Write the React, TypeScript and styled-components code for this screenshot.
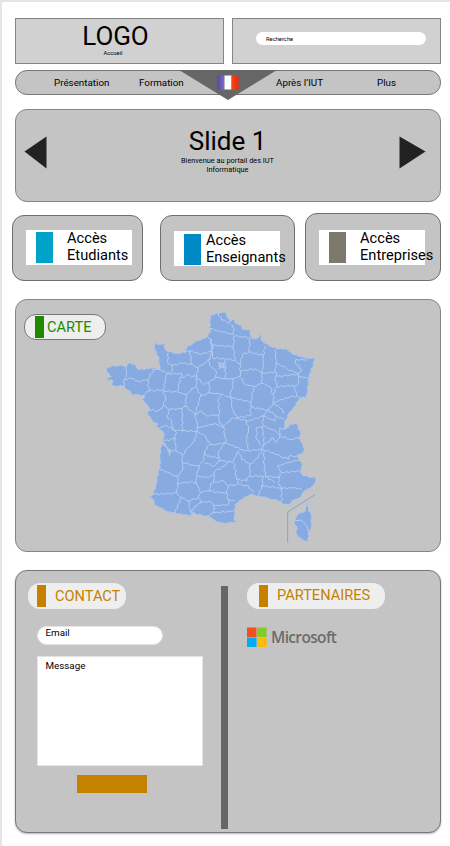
import React from 'react';
import styled, { createGlobalStyle } from 'styled-components';

const GlobalStyle = createGlobalStyle`
  *, *::before, *::after { box-sizing: border-box; }
  body { margin: 0; background: #fff; }
  h1, h2, p { margin: 0; font-weight: 400; }
`;

const Page = styled.div`
  width: 450px;
  height: 846px;
  overflow: hidden;
  border-top: 2px solid #e5e5e5;
  border-left: 2px solid #e5e5e5;
  padding: 16px 9px 0 13px;
  background: #fff;
  color: #000;
  font-family: Roboto, 'Liberation Sans', sans-serif;
`;

const Header = styled.header`
  display: flex;
  justify-content: space-between;
  height: 46px;
`;

const HeaderBox = styled.div`
  height: 46px;
  width: 209px;
  border: 1px solid #858585;
  background: #d1d1d1;
`;

const Brand = styled(HeaderBox)`
  padding: 2px 8px 0 0;
  text-align: center;
`;

const Logo = styled.h1`
  font-size: 26px;
  line-height: 30px;
  letter-spacing: -0.1px;
`;

const Tagline = styled.p`
  font-size: 5.8px;
  line-height: 5px;
  padding-right: 5px;
`;

const SearchBox = styled(HeaderBox)`
  padding: 13px 0 0 23px;
`;

const SearchField = styled.div`
  width: 170px;
  height: 13px;
  border-radius: 7px;
  padding-left: 10px;
  background: #fff;
  font-size: 5.8px;
  line-height: 14px;
`;

const Nav = styled.nav`
  display: grid;
  grid-template-columns: 38px 85px 79px 58px 101px 1fr;
  height: 25px;
  margin-top: 6px;
  border: 1px solid #777;
  border-radius: 12px;
  background: #c4c4c4;
  font-size: 9.8px;
  line-height: 23px;
  position: relative;
`;

const NavItem = styled.span<{ $col: number }>`
  grid-column: ${(p) => p.$col};
  grid-row: 1;
  white-space: nowrap;
  z-index: 1;
`;

const LanguageMarker = styled.svg`
  position: absolute;
  left: 163px;
  top: -1px;
`;

const Slide = styled.section`
  display: flex;
  justify-content: space-between;
  height: 93px;
  margin-top: 14px;
  padding: 0 14px 0 8px;
  border: 1px solid #858585;
  border-radius: 12px;
  background: #c4c4c4;
`;

const Arrow = styled.svg`
  margin-top: 26px;
`;

const SlideText = styled.div`
  padding: 15px 0 0 9px;
  text-align: center;
`;

const SlideTitle = styled.h2`
  font-size: 26px;
  line-height: 32px;
`;

const SlideCaption = styled.p`
  font-size: 7.35px;
  line-height: 8.5px;
`;

const Accesses = styled.section`
  display: flex;
  align-items: flex-end;
  height: 68px;
  margin: 11px 0 0 -3px;
`;

const AccessCard = styled.div<{ $w: number; $h: number; $gap: number; $top: number }>`
  flex: none;
  width: ${(p) => p.$w}px;
  height: ${(p) => p.$h}px;
  margin-right: ${(p) => p.$gap}px;
  padding: ${(p) => p.$top}px 0 0 13.4px;
  border: 1px solid #6f6f6f;
  border-radius: 12px;
  background: #c4c4c4;
`;

const AccessLabel = styled.div`
  display: flex;
  width: 106px;
  height: 35px;
  padding: 2.5px 0 0 10px;
  background: #fff;
`;

const Swatch = styled.span<{ $color: string }>`
  flex: none;
  width: 17px;
  height: 31px;
  background: ${(p) => p.$color};
`;

const AccessText = styled.span<{ $gap: number }>`
  margin: -2px 0 0 ${(p) => p.$gap}px;
  font-size: 14.6px;
  line-height: 17.3px;
  white-space: nowrap;
`;

const MapPanel = styled.section`
  display: flex;
  height: 253px;
  margin-top: 18px;
  padding: 0 0 0 8px;
  border: 1px solid #858585;
  border-radius: 12px;
  background: #c4c4c4;
`;

const Tag = styled.h2<{ $w: number; $pad: number; $gap: number; $color: string; $lift?: number }>`
  display: flex;
  flex: none;
  width: ${(p) => p.$w}px;
  height: 26px;
  padding: 2px 0 0 ${(p) => p.$pad}px;
  gap: ${(p) => p.$gap}px;
  border-radius: 12px;
  background: #eee;
  color: ${(p) => p.$color};
  font-size: 14.6px;
  line-height: ${(p) => 23 - (p.$lift ?? 0)}px;
`;

const MapTag = styled(Tag)`
  margin-top: 14px;
  padding-top: 1px;
  border: 1px solid #777;
`;

const TagBar = styled.span<{ $color: string }>`
  flex: none;
  width: 8.5px;
  height: 22px;
  background: ${(p) => p.$color};
`;

const MapDrawing = styled.svg`
  flex: none;
  margin-left: -11px;
`;

const BottomPanel = styled.section`
  display: flex;
  height: 263px;
  margin-top: 18px;
  border: 1px solid #777;
  border-radius: 12px;
  background: #c4c4c4;
  box-shadow: 0 1px 2px rgba(0, 0, 0, 0.3);
`;

const Contact = styled.div`
  width: 205px;
  padding: 12px 0 0 12px;
`;

const EmailField = styled.div`
  width: 126px;
  height: 19px;
  margin: 17px 0 0 9px;
  padding-left: 7.5px;
  border: 1px solid #e4e4e4;
  border-radius: 10px;
  background: #fff;
  font-size: 9.8px;
  line-height: 11px;
`;

const MessageField = styled.div`
  width: 166px;
  height: 110px;
  margin: 11px 0 0 9px;
  padding: 3px 7.5px;
  border: 1px solid #e4e4e4;
  background: #fff;
  font-size: 9.8px;
  line-height: 12px;
`;

const SendButton = styled.button`
  display: block;
  width: 70px;
  height: 18px;
  margin: 9px 0 0 49px;
  padding: 0;
  border: 0;
  background: #c48200;
`;

const Divider = styled.div`
  width: 7px;
  height: 243px;
  margin-top: 15px;
  background: #666;
`;

const Partners = styled.div`
  padding: 12px 0 0 19px;
`;

const PartnerLogo = styled.div`
  display: flex;
  gap: 4px;
  margin-top: 18px;
  color: #6c6c6c;
  font-family: 'Open Sans', 'Noto Sans', sans-serif;
  font-size: 15.5px;
  font-weight: 600;
  line-height: 20px;
  letter-spacing: -0.65px;
`;

const OUTLINE = '346 48 365 42 392 38 396 52 402 60 406 68 414 58 421 72 440 80 442 90 462 90 468 110 472 118 490 115 496 102 500 110 498 122 510 132 524 140 543 145 548 150 575 148 592 165 620 172 630 176 660 178 655 195 642 230 638 270 634 294 618 296 610 305 592 330 578 348 575 360 568 375 566 390 575 387 585 375 605 373 610 390 618 405 612 417 622 433 628 450 620 463 605 470 615 485 623 495 615 515 620 525 640 533 662 535 660 550 645 567 628 575 615 595 592 603 582 615 565 615 558 607 535 600 520 597 502 593 480 588 465 585 442 600 420 615 418 663 425 667 400 670 390 673 365 667 350 655 330 650 290 640 290 647 265 647 240 640 220 637 195 625 180 617 178 603 162 595 175 585 182 560 190 520 196 505 195 465 200 432 218 448 223 470 226 455 212 437 200 425 207 415 205 398 192 385 180 380 190 375 172 365 163 350 155 340 165 330 158 318 140 300 150 292 130 285 108 288 105 275 90 265 75 258 65 262 50 258 55 245 35 240 50 232 35 218 36 204 60 200 80 198 95 200 105 190 120 195 130 212 155 208 172 205 195 210 192 180 180 150 178 130 190 135 207 132 208 145 218 157 245 162 270 160 275 145 300 128 335 115 345 100';

const CORSICA = '638 610 640 635 648 645 650 680 642 695 638 727 630 725 610 713 602 695 608 690 598 670 602 655 615 640 632 635 635 610';

const BORDERS = [
  '95 200 93 235 88 240 88 262', '88 240 110 238 130 245 160 242', '172 205 176 212 158 240 162 275 140 292',
  '176 212 195 210 215 222 230 218', '162 275 205 272 215 225', '230 218 232 198 218 190 220 160',
  '230 198 262 192 290 195 285 155 270 158', '215 225 260 222 250 265 245 278 205 275',
  '290 195 308 205 305 232 275 228 260 235', '285 155 320 165 350 155 345 180 325 195 308 205',
  '350 155 348 120 338 112', '305 232 303 258 275 285 248 278', '275 285 270 320 262 328 225 330 205 318 212 295 205 275',
  '270 320 300 345 310 310 318 290 303 262', '225 330 215 350 230 365 233 390 262 395 262 328', '160 330 190 335 205 320',
  '318 290 345 280', '300 345 320 335 335 350 355 348 372 350', '305 232 325 255 342 250',
  '345 88 380 98 415 105 418 90 410 75', '370 42 380 62 405 70', '348 120 352 138 415 142 418 110 468 115',
  '352 138 352 175 420 182 435 195 442 165 462 158 465 118', '415 142 420 182', '462 158 505 168 510 140',
  '435 195 436 215 480 208 502 222 505 195 505 168', '338 180 350 205 363 215 362 235 342 250', '390 182 392 238 362 235',
  '392 240 412 238 415 262 405 285 408 295', '342 250 345 280 378 285 408 295', '412 238 436 230 436 215',
  '436 235 450 255 480 262 500 252 502 222', '408 295 468 308 475 265', '378 288 370 300 372 330 372 365 385 383',
  '408 295 412 330 425 355 466 350 468 308', '500 252 525 262 535 285 535 310 520 332 495 330 468 322',
  '502 222 540 218 545 200 540 150', '545 190 575 208 610 222 620 210 600 190 603 180 635 182',
  '545 218 540 235 545 262 535 285', '545 232 610 224', '612 230 640 238', '545 262 597 258 605 290 618 296',
  '610 225 612 250 600 262', '535 310 585 292 605 290', '535 310 550 320 570 342', '520 332 545 350 568 362',
  '195 385 215 378 233 390', '205 425 240 418 245 400 233 390', '262 395 305 395 308 380 300 345',
  '240 418 242 450 262 468 262 488', '223 450 242 455', '305 395 300 425 270 455 262 468',
  '305 385 335 380 360 373', '305 395 330 410 345 435 365 435', '262 488 300 500 312 500 328 480 328 455 345 435',
  '262 490 265 510 248 530 230 525 205 512 195 512', '248 530 250 545 245 580', '175 585 245 582 258 595 282 605 310 595 318 580 305 555 302 540 312 500',
  '248 552 285 548 305 550', '258 595 240 640', '282 605 285 640', '318 580 335 575 345 575', '310 530 340 535 358 525',
  '310 595 318 610 345 605 355 620', '318 610 300 620 290 640', '360 373 385 383 395 370 415 355 460 365 505 350 520 332',
  '385 383 390 405 392 430 450 455 500 450', '455 365 460 390 455 420 460 450', '485 385 485 420 500 440 508 430 502 385 485 385',
  '502 385 505 350', '505 380 540 395 555 410 545 430 535 415 505 440', '555 410 585 420 612 417', '555 410 555 385 566 390',
  '505 350 540 365 545 350', '392 430 370 455 372 485 390 485 412 490 430 455', '365 435 392 430',
  '430 455 440 480 465 495 490 475 500 450', '417 490 425 540 455 545 465 520 465 495', '505 440 508 495 510 530 540 550',
  '500 450 535 460 555 470 580 480 582 470 605 470', '548 500 580 490 615 480', '548 500 560 520 612 515',
  '555 520 550 550 560 568 600 565 620 570', '465 530 505 530 500 560 490 590', '500 560 550 565 560 568 560 605',
  '510 530 555 535', '355 550 360 515 390 500 400 485', '355 550 385 545 400 560 395 580 375 580 345 575 345 555 355 550',
  '400 560 425 555 430 540', '395 580 400 600 420 605', '415 635 360 640 355 620 400 615 400 600',
  '430 555 460 560 475 580', '372 485 358 500 328 490', '335 650 360 640', '600 663 618 662 635 680 638 695',
  '372 192 378 190 385 195 387 202 380 206 373 203 372 192', '368 188 378 198 390 208', '390 190 378 198 370 208', '328 455 335 470 372 475',
];

/* Breaks straight runs into short uneven steps so borders look surveyed. */
const roughen = (source: string, amount: number, closed = false) => {
  const n = source.split(' ').map(Number);
  const pts: number[][] = [];
  for (let i = 0; i < n.length; i += 2) pts.push([n[i], n[i + 1]]);
  if (closed) pts.push(pts[0]);
  let d = `M${pts[0].join(' ')}`;
  for (let i = 1; i < pts.length; i++) {
    const [ax, ay] = pts[i - 1];
    const [bx, by] = pts[i];
    const len = Math.hypot(bx - ax, by - ay);
    const steps = Math.max(1, Math.round(len / 8));
    for (let k = 1; k < steps; k++) {
      const t = k / steps;
      const off = Math.sin(ax * 1.7 + by * 2.3 + k * 2.6) * amount;
      d += `L${(ax + (bx - ax) * t - ((by - ay) / len) * off).toFixed(1)} ${(ay + (by - ay) * t + ((bx - ax) / len) * off).toFixed(1)}`;
    }
    d += `L${bx} ${by}`;
  }
  return closed ? d + 'Z' : d;
};

const FranceMap = () => (
  <MapDrawing width="230" height="251" viewBox="0 2 690 753" aria-label="France">
    <g fill="#87aae0" stroke="#adc5eb" strokeWidth="2.5" strokeLinejoin="round">
      <path d={roughen(OUTLINE, 2.2, true)} />
      <path d={roughen(CORSICA, 2, true)} />
    </g>
    <g fill="none" stroke="#b9cef0" strokeWidth="2.8" strokeLinejoin="round">
      {BORDERS.map((b) => <path key={b} d={roughen(b, 2.8)} />)}
    </g>
    <path d="M660 586L578 638V730" fill="none" stroke="#87a3cf" strokeWidth="3" />
  </MapDrawing>
);

const accesses = [
  { name: 'Etudiants', color: '#00a2c7', w: 130.5, h: 66, gap: 17.5, top: 13.5, textGap: 13.7 },
  { name: 'Enseignants', color: '#0089c7', w: 135, h: 66, gap: 10, top: 15.4, textGap: 4.6 },
  { name: 'Entreprises', color: '#7c786e', w: 136, h: 68, gap: 0, top: 15.5, textGap: 13.7 },
];

export default function App() {
  return (
    <Page>
      <GlobalStyle />
      <Header>
        <Brand>
          <Logo>LOGO</Logo>
          <Tagline>Accueil</Tagline>
        </Brand>
        <SearchBox><SearchField>Recherche</SearchField></SearchBox>
      </Header>
      <Nav>
        <NavItem $col={2}>Présentation</NavItem>
        <NavItem $col={3}>Formation</NavItem>
        <NavItem $col={5}>Après l’IUT</NavItem>
        <NavItem $col={6}>Plus</NavItem>
        <LanguageMarker width="98" height="30" viewBox="0 0 98 30">
          <defs>
            <linearGradient id="flagBlue"><stop offset="0" stopColor="#5549a8" /><stop offset="1" stopColor="#7770c8" /></linearGradient>
            <linearGradient id="flagRed"><stop offset="0" stopColor="#ff431c" /><stop offset="1" stopColor="#e62b08" /></linearGradient>
          </defs>
          <path d="M0 0H98L49 30Z" fill="#666" />
          <path d="M38.5 5.5h7v14h-7z" fill="url(#flagBlue)" />
          <path d="M45.5 5.5h7v14h-7z" fill="#fff" />
          <path d="M52.5 5.5h7v14h-7z" fill="url(#flagRed)" />
        </LanguageMarker>
      </Nav>
      <Slide>
        <Arrow width="23" height="34" viewBox="0 0 23 34"><path d="M22.5 .5V32.5L.5 15.5Z" fill="#222" /></Arrow>
        <SlideText>
          <SlideTitle>Slide 1</SlideTitle>
          <SlideCaption>Bienvenue au portail des IUT<br />Informatique</SlideCaption>
        </SlideText>
        <Arrow width="27" height="34" viewBox="0 0 27 34"><path d="M.5 .5V32.5L26.5 15.5Z" fill="#222" /></Arrow>
      </Slide>
      <Accesses>
        {accesses.map((a) => (
          <AccessCard key={a.name} $w={a.w} $h={a.h} $gap={a.gap} $top={a.top}>
            <AccessLabel>
              <Swatch $color={a.color} />
              <AccessText $gap={a.textGap}>Accès<br />{a.name}</AccessText>
            </AccessLabel>
          </AccessCard>
        ))}
      </Accesses>
      <MapPanel>
        <MapTag $w={82} $pad={10} $gap={3.5} $color="#1d8a00"><TagBar $color="#1d8a00" />CARTE</MapTag>
        <FranceMap />
      </MapPanel>
      <BottomPanel>
        <Contact>
          <Tag $w={98} $pad={9} $gap={9.5} $color="#c48200"><TagBar $color="#c48200" />CONTACT</Tag>
          <EmailField>Email</EmailField>
          <MessageField>Message</MessageField>
          <SendButton aria-label="Envoyer" />
        </Contact>
        <Divider />
        <Partners>
          <Tag $w={138} $pad={12} $gap={9.5} $color="#c48200" $lift={3}><TagBar $color="#c48200" />PARTENAIRES</Tag>
          <PartnerLogo>
            <svg width="20" height="20" viewBox="0 0 20 20">
              <path d="M0 .5h9.5V10H0z" fill="#f25022" />
              <path d="M10 .5h9.5V10H10z" fill="#80cc28" />
              <path d="M0 10.5h9.5V20H0z" fill="#00adef" />
              <path d="M10 10.5h9.5V20H10z" fill="#fbbc09" />
            </svg>
            Microsoft
          </PartnerLogo>
        </Partners>
      </BottomPanel>
    </Page>
  );
}
